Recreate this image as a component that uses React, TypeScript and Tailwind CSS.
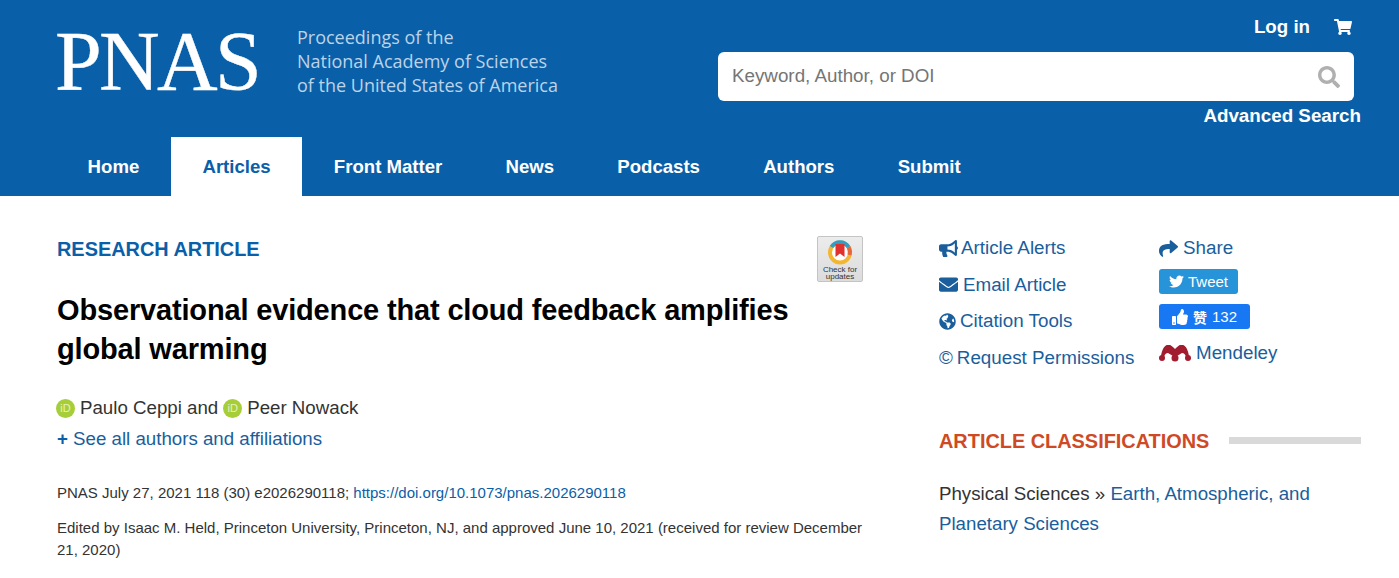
import { FaBullhorn, FaEnvelope, FaGlobeAmericas, FaShare, FaShoppingCart, FaSearch, FaTwitter, FaThumbsUp } from "react-icons/fa";

const navItems = ["Home", "Articles", "Front Matter", "News", "Podcasts", "Authors", "Submit"];

const Orcid = () => (
  <span className="inline-flex h-[19px] w-[19px] items-center justify-center rounded-full bg-[#a6ce39] text-[11px] leading-none text-[#e6f2c0]">
    iD
  </span>
);

const Mendeley = () => (
  <svg width="32" height="18" viewBox="0 0 32 18" fill="#a11c2e">
    <path d="M2 12 C3 6 5 1 9 1 C12 1 14 3 16 5 C18 3 20 1 23 1 C27 1 29 6 30 12 L27 13 C26 10 25 9 23 9 L18 12 L14 12 L9 9 C7 9 6 10 5 13 Z" />
    <circle cx="9.5" cy="5" r="4" />
    <circle cx="22.5" cy="5" r="4" />
    <circle cx="3" cy="14" r="3" />
    <circle cx="29" cy="14" r="3" />
    <circle cx="16" cy="14" r="3.5" />
  </svg>
);

const CheckUpdates = () => (
  <div className="flex h-[46px] w-[46px] flex-col items-center rounded-[2px] border border-[#c4c4c4] bg-gradient-to-b from-[#ececec] to-[#dcdcdc] pt-[3px]">
    <svg width="26" height="25" viewBox="0 0 26 25">
      <circle cx="13" cy="12.5" r="10" fill="#fff" stroke="#f2b632" strokeWidth="4" />
      <path d="M4.5 7 A10 10 0 0 1 21.5 7" fill="none" stroke="#2f9fc4" strokeWidth="4" />
      <path d="M21.5 7 A10 10 0 0 1 22.5 15" fill="none" stroke="#e8663c" strokeWidth="4" />
      <path d="M8.5 4 H17.5 V17 L13 13.5 L8.5 17 Z" fill="#e0312f" />
    </svg>
    <span className="mt-[1px] text-center text-[8px] leading-[7px] text-[#333]">Check for updates</span>
  </div>
);

export default function App() {
  return (
    <div className="h-[578px] overflow-hidden bg-white font-['Liberation_Sans',Arial,sans-serif]">
      <header className="h-[196px] bg-[#0a60a8] text-white">
        <div className="flex h-[137px] justify-between pl-[55px] pr-[38px]">
          <div className="flex items-start pt-[22px]">
            <span className="font-['Liberation_Serif',serif] text-[84px] leading-[80px] tracking-[-2.7px] [-webkit-text-stroke:0.4px_white]">PNAS</span>
            <div className="ml-[38px] pt-[3px] font-['Open_Sans',sans-serif] text-[18px] leading-[24px] text-[#bcd3e8]">
              <div>Proceedings of the</div>
              <div>National Academy of Sciences</div>
              <div>of the United States of America</div>
            </div>
          </div>
          <div className="flex w-[643px] flex-col">
            <div className="flex h-[52px] items-center justify-end gap-[24px] pr-[9px] pt-[2px]">
              <span className="text-[18.7px] font-bold">Log in</span>
              <FaShoppingCart className="text-[18px]" />
            </div>
            <div className="mr-[7px] flex h-[49px] items-center justify-between rounded-[6px] bg-white pl-[14px] pr-[14px]">
              <span className="text-[18.8px] text-[#757575]">Keyword, Author, or DOI</span>
              <FaSearch className="text-[22px] text-[#b0b0b0]" />
            </div>
            <div className="mt-[3px] text-right text-[18.8px] font-bold leading-[24px]">Advanced Search</div>
          </div>
        </div>
        <nav className="flex h-[59px] pl-[56px] text-[18.6px] font-bold">
          {navItems.map((item) => (
            <div
              key={item}
              className={`flex items-center px-[31.6px] ${item === "Articles" ? "bg-white text-[#0a60a8]" : ""}`}
            >
              {item}
            </div>
          ))}
        </nav>
      </header>
      <main className="flex pl-[57px] pr-[38px]">
        <section className="w-[806px] pt-[40px]">
          <div className="flex items-start justify-between">
            <h3 className="text-[19.9px] font-bold leading-[26px] text-[#0a60a8]">RESEARCH ARTICLE</h3>
            <CheckUpdates />
          </div>
          <h1 className="mt-[9px] text-[29px] font-bold leading-[39px] tracking-[-0.16px] text-black">
            Observational evidence that cloud feedback amplifies
            <br />
            global warming
          </h1>
          <div className="-ml-[1px] mt-[27px] flex items-center text-[18.7px] leading-[24px] text-[#333]">
            <Orcid />
            <span className="ml-[5px]">Paulo Ceppi and</span>
            <span className="ml-[5px] flex"><Orcid /></span>
            <span className="ml-[5px]">Peer Nowack</span>
          </div>
          <div className="mt-[7px] text-[18.7px] leading-[24px] text-[#1a5e9c]">
            <span className="font-bold text-[#0a60a8]">+</span> See all authors and affiliations
          </div>
          <div className="mt-[31px] text-[15px] leading-[22px] text-[#333]">
            PNAS July 27, 2021 118 (30) e2026290118; <span className="text-[#0a60a8]">https://doi.org/10.1073/pnas.2026290118</span>
          </div>
          <div className="mt-[13px] text-[15px] leading-[22px] text-[#333]">
            Edited by Isaac M. Held, Princeton University, Princeton, NJ, and approved June 10, 2021 (received for review December 21, 2020)
          </div>
        </section>
        <aside className="ml-[76px] flex-1 pt-[40px]">
          <div className="flex text-[18.8px] leading-[24px] text-[#1a5e9c]">
            <div className="flex w-[220px] flex-col gap-[12.5px]">
              <div className="flex items-center gap-[3px]"><FaBullhorn className="text-[19px]" />Article Alerts</div>
              <div className="flex items-center gap-[5px]"><FaEnvelope className="text-[19px]" />Email Article</div>
              <div className="flex items-center gap-[4px]"><FaGlobeAmericas className="text-[17px]" />Citation Tools</div>
              <div className="flex items-center gap-[4px]"><span>©</span>Request Permissions</div>
            </div>
            <div className="flex flex-col">
              <div className="flex items-center gap-[5px]"><FaShare className="text-[19px]" />Share</div>
              <div className="mt-[9px] flex h-[25px] w-[79px] items-center justify-center gap-[4px] rounded-[3px] bg-[#2793d8] text-[15px] text-white">
                <FaTwitter />Tweet
              </div>
              <div className="mt-[10px] flex h-[25px] w-[91px] items-center justify-center gap-[5px] rounded-[3px] bg-[#1877f2] text-[15px] text-white">
                <FaThumbsUp className="text-[16px]" />
                <span className="font-['Noto_Sans_CJK_SC',sans-serif] text-[14px] font-bold">赞</span> 132
              </div>
              <div className="mt-[12px] flex items-center gap-[5px]"><Mendeley />Mendeley</div>
            </div>
          </div>
          <div className="mt-[58px] flex items-center">
            <h3 className="whitespace-nowrap text-[19.9px] font-bold leading-[26px] text-[#cf4a24]">ARTICLE CLASSIFICATIONS</h3>
            <div className="ml-[20px] h-[7px] flex-1 bg-[#d9d9d9]" />
          </div>
          <p className="mt-[25px] text-[18.7px] leading-[30px] text-[#333]">
            Physical Sciences » <span className="text-[#1a5e9c]">Earth, Atmospheric, and</span>
            <br />
            <span className="text-[#1a5e9c]">Planetary Sciences</span>
          </p>
        </aside>
      </main>
    </div>
  );
}
